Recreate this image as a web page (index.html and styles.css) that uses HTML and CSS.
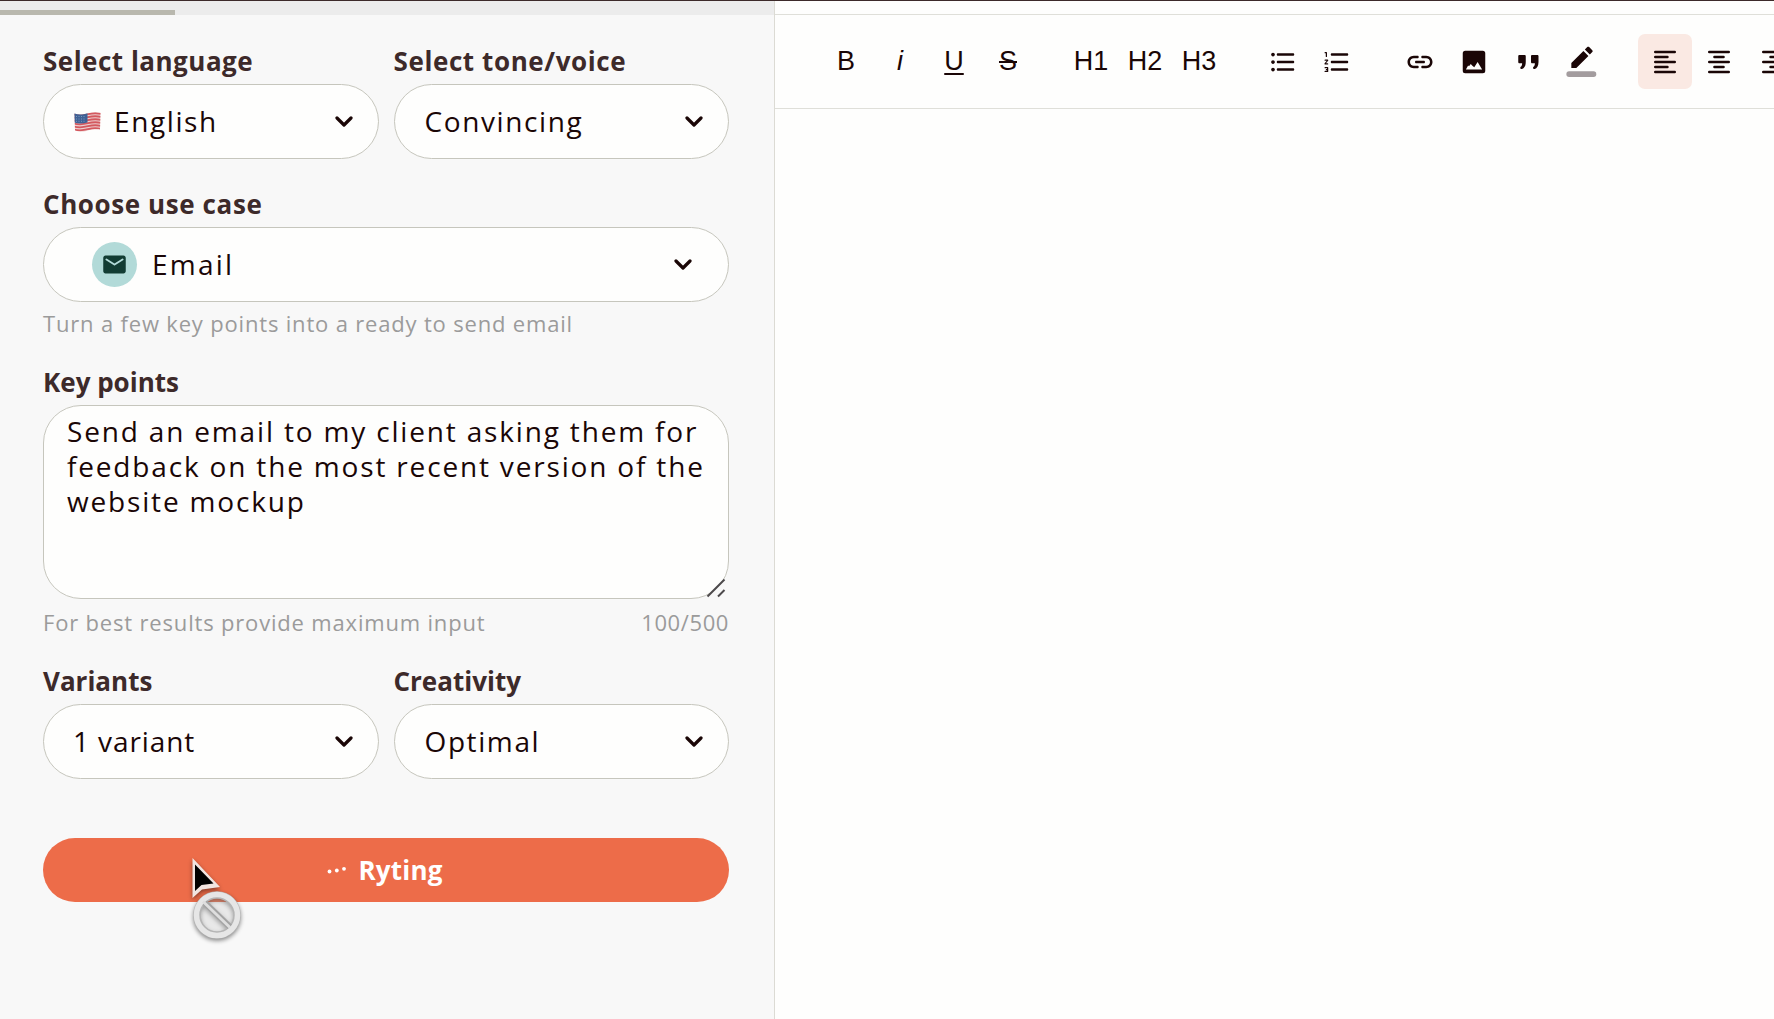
FILE: index.html
```html
<!DOCTYPE html>
<html lang="en">
<head>
  <meta charset="UTF-8" />
  <title>Editor</title>
  <link rel="stylesheet" href="styles.css">
</head>
<body>
  <svg class="defs">
    <symbol id="chevron" viewBox="0 0 18 12">
      <path d="M2 2l7 7 7-7" fill="none" stroke="#1a0606" stroke-width="3.2" stroke-linecap="round" stroke-linejoin="round" />
    </symbol>
  </svg>

  <div class="app">
    <aside class="panel">
      <div class="panel-top">
        <div class="progress"></div>
      </div>

      <form class="form">
        <div class="row">
          <div class="field">
            <label>Select language</label>
            <div class="select">
              <svg class="flag" viewBox="0 0 27 20">
                <clipPath id="wave"><path d="M0.5 1.5C5 3 9 2.500 14 1.200S23 0 26.500 0.800L26 17.500C22 17 18 17.500 13 18.700S5 20 1 18.500z" /></clipPath>
                <g clip-path="url(#wave)">
                  <rect width="27" height="20" fill="#ecd0d0" />
                  <path d="M0 2.500c5 1.500 9 1 14-.3s9-1.200 13-.4M0 5.500c5 1.500 9 1 14-.3s9-1.200 13-.4M0 8.500c5 1.500 9 1 14-.3s9-1.200 13-.4M0 11.500c5 1.500 9 1 14-.3s9-1.200 13-.4M0 14.500c5 1.500 9 1 14-.3s9-1.200 13-.4M0 17.500c5 1.500 9 1 14-.3s9-1.200 13-.4" fill="none" stroke="#d4595f" stroke-width="1.8" />
                  <path d="M0 0h13.500v10.500c-5 1.200-9 1.200-13.500 0z" fill="#3f6296" />
                  <path d="M2 4.500h10M2 7h10M2 9.300h10" stroke="#8ba4c6" stroke-width="0.8" stroke-dasharray="1 1.500" />
                </g>
              </svg>
              <span class="value">English</span>
              <svg class="chevron"><use href="#chevron" /></svg>
            </div>
          </div>
          <div class="field">
            <label class="wide">Select tone/voice</label>
            <div class="select">
              <span class="value">Convincing</span>
              <svg class="chevron"><use href="#chevron" /></svg>
            </div>
          </div>
        </div>

        <div class="field use-case">
          <label class="wide">Choose use case</label>
          <div class="select">
            <span class="badge">
              <svg viewBox="0 0 24 24"><path fill="#123c33" d="M20 4H4c-1.100 0-2 .9-2 2v12c0 1.100.9 2 2 2h16c1.100 0 2-.9 2-2V6c0-1.100-.9-2-2-2zm-.4 4.250l-7.070 4.420c-.32.2-.74.2-1.060 0L4.400 8.250a.85.85 0 1 1 .9-1.440L12 11l6.700-4.190a.85.85 0 1 1 .9 1.440z" /></svg>
            </span>
            <span class="value">Email</span>
            <svg class="chevron"><use href="#chevron" /></svg>
          </div>
          <div class="help">Turn a few key points into a ready to send email</div>
        </div>

        <div class="field key-points">
          <label class="tight">Key points</label>
          <div class="textarea-wrap">
            <textarea spellcheck="false">Send an email to my client asking them for feedback on the most recent version of the website mockup</textarea>
            <svg class="resizer" viewBox="0 0 20 20"><path d="M1.500 18.500l17-17M12 18.500l6.500-6.500" stroke="#4d4a4c" stroke-width="2" /></svg>
          </div>
          <div class="help">
            <span>For best results provide maximum input</span>
            <span class="count">100/500</span>
          </div>
        </div>

        <div class="row options">
          <div class="field">
            <label class="tight">Variants</label>
            <div class="select">
              <span class="value tight">1 variant</span>
              <svg class="chevron"><use href="#chevron" /></svg>
            </div>
          </div>
          <div class="field">
            <label class="tight">Creativity</label>
            <div class="select">
              <span class="value">Optimal</span>
              <svg class="chevron"><use href="#chevron" /></svg>
            </div>
          </div>
        </div>

        <button class="submit" type="button" disabled>
          <svg class="dots" viewBox="0 0 20 8">
            <circle cx="2.500" cy="5.500" r="1.900" /><circle cx="9.800" cy="4.500" r="1.900" /><circle cx="17" cy="2.800" r="1.900" />
          </svg>
          <span>Ryting</span>
        </button>
      </form>
    </aside>

    <main class="editor">
      <div class="editor-top"></div>
      <div class="toolbar">
        <div class="group">
          <button>B</button>
          <button class="italic">i</button>
          <button class="underline">U</button>
          <button class="strike">S</button>
        </div>
        <div class="group">
          <button>H1</button>
          <button>H2</button>
          <button>H3</button>
        </div>
        <div class="group icons">
          <button>
            <svg viewBox="0 0 24 24"><path d="M4 10.500c-.83 0-1.500.67-1.500 1.500s.67 1.500 1.500 1.500 1.500-.67 1.500-1.500-.67-1.500-1.500-1.500zm0-6c-.83 0-1.500.67-1.500 1.500S3.170 7.500 4 7.500 5.500 6.830 5.500 6 4.830 4.500 4 4.500zm0 12c-.83 0-1.500.68-1.500 1.500s.68 1.500 1.500 1.500 1.500-.68 1.500-1.500-.67-1.500-1.500-1.500zM8 19h12c.55 0 1-.45 1-1s-.45-1-1-1H8c-.55 0-1 .45-1 1s.45 1 1 1zm0-6h12c.55 0 1-.45 1-1s-.45-1-1-1H8c-.55 0-1 .45-1 1s.45 1 1 1zM7 6c0 .55.45 1 1 1h12c.55 0 1-.45 1-1s-.45-1-1-1H8c-.55 0-1 .45-1 1z" /></svg>
          </button>
          <button>
            <svg viewBox="0 0 24 24"><path d="M8 7h12c.55 0 1-.45 1-1s-.45-1-1-1H8c-.55 0-1 .45-1 1s.45 1 1 1zm12 10H8c-.55 0-1 .45-1 1s.45 1 1 1h12c.55 0 1-.45 1-1s-.45-1-1-1zm0-6H8c-.55 0-1 .45-1 1s.45 1 1 1h12c.55 0 1-.45 1-1s-.45-1-1-1zM4.500 16h-2c-.28 0-.5.220-.5.500s.22.500.5.500H4v.5h-.5c-.28 0-.5.220-.5.500s.22.500.5.500H4v.5H2.500c-.28 0-.5.220-.5.500s.22.500.5.500h2c.28 0 .5-.22.5-.5v-3c0-.28-.22-.5-.5-.5zm-2-11H3v2.500c0 .28.22.500.5.500s.5-.22.500-.5v-3c0-.28-.22-.5-.5-.5h-1c-.28 0-.5.220-.5.500s.22.500.5.500zm2 5h-2c-.28 0-.5.220-.5.500s.22.500.5.500h1.300l-1.680 1.960c-.08.09-.12.210-.12.320v.22c0 .28.22.500.5.500h2c.28 0 .5-.22.500-.5s-.22-.5-.5-.5H3.200l1.680-1.960c.08-.09.12-.21.12-.32v-.22c0-.28-.22-.5-.5-.5z" /></svg>
          </button>
        </div>
        <div class="group">
          <button>
            <svg viewBox="0 0 24 24"><path d="M17 7h-3c-.55 0-1 .45-1 1s.45 1 1 1h3c1.650 0 3 1.350 3 3s-1.350 3-3 3h-3c-.55 0-1 .45-1 1s.45 1 1 1h3c2.760 0 5-2.240 5-5s-2.240-5-5-5zm-9 5c0 .55.45 1 1 1h6c.55 0 1-.45 1-1s-.45-1-1-1H9c-.55 0-1 .45-1 1zm2 3H7c-1.650 0-3-1.350-3-3s1.350-3 3-3h3c.55 0 1-.45 1-1s-.45-1-1-1H7c-2.760 0-5 2.240-5 5s2.240 5 5 5h3c.55 0 1-.45 1-1s-.45-1-1-1z" /></svg>
          </button>
          <button>
            <svg viewBox="0 0 24 24"><path fill-rule="evenodd" d="M5 3h14a2 2 0 0 1 2 2v14a2 2 0 0 1-2 2H5a2 2 0 0 1-2-2V5a2 2 0 0 1 2-2zM5.500 18h13l-3.600-6-2.700 4.200-1.500-1.200-1.300-1.500-1.400 1.800-.7-.6z" /></svg>
          </button>
          <button>
            <svg viewBox="0 0 24 24"><path d="M3 6h4c.6 0 1 .4 1 1v4.500c0 3.200-1.300 5.200-3 5.700-.8.200-1.300-.1-1.300-.8v-.8c1.100-.5 1.400-1.800 1.400-3.100H3c-.6 0-1-.4-1-1V7c0-.6.400-1 1-1z" transform="translate(2.200 .4)" /><path d="M3 6h4c.6 0 1 .4 1 1v4.500c0 3.200-1.300 5.200-3 5.700-.8.200-1.300-.1-1.300-.8v-.8c1.100-.5 1.400-1.800 1.400-3.100H3c-.6 0-1-.4-1-1V7c0-.6.400-1 1-1z" transform="translate(12.400 .4)" /></svg>
          </button>
          <button>
            <svg class="marker" viewBox="0 0 24 24"><path d="M13.060 5.190l3.750 3.750L7.750 18H4v-3.750l9.060-9.060zm4.820 2.680l-3.750-3.750 1.830-1.830c.39-.39 1.020-.39 1.410 0l2.340 2.340c.39.39.39 1.020 0 1.410l-1.830 1.830z" /><rect x="0.300" y="20.500" width="22.400" height="4.200" rx="2" fill="#a39c9e" /></svg>
          </button>
        </div>
        <div class="group">
          <button class="active">
            <svg class="align" viewBox="0 0 24 26"><path d="M2.200 3h19.600M2.200 8h12.300M2.200 13h19.600M2.200 18h12.300M2.200 23h19.600" /></svg>
          </button>
          <button>
            <svg class="align" viewBox="0 0 24 26"><path d="M2.200 3h19.600M7.400 8h9.200M2.200 13h19.600M7.400 18h9.200M2.200 23h19.600" /></svg>
          </button>
          <button>
            <svg class="align" viewBox="0 0 24 26"><path d="M2.200 3h19.600M9.500 8h12.300M2.200 13h19.600M9.500 18h12.300M2.200 23h19.600" /></svg>
          </button>
        </div>
      </div>
    </main>
  </div>

  <svg class="cursor" viewBox="0 0 56 86">
    <circle cx="26" cy="58" r="20" fill="#fff" fill-opacity="0.2" />
    <circle cx="26" cy="58" r="20" fill="none" stroke="#b5b5b5" stroke-width="7.600" />
    <path d="M12 44l28 27" stroke="#a3a3a3" stroke-width="6" />
    <circle cx="26" cy="58" r="20.500" fill="none" stroke="#e6e6e6" stroke-width="5.500" />
    <path d="M12 44.500l27 26" stroke="#dedede" stroke-width="3" />
    <path d="M1.500 1v40l9.500-8.500 18-2.500z" fill="#f1e4e0" />
    <path d="M4 7.500v26.500l6.500-6 12-1.500z" fill="#000" />
  </svg>
</body>
</html>
```
FILE: styles.css
```css
* {
  box-sizing: border-box;
}
body {
  margin: 0;
  height: 1019px;
  overflow: hidden;
  font-family: "Open Sans", sans-serif;
  color: #1a0606;
  background: #fefefd;
}
.defs {
  display: none;
}
.app {
  display: flex;
  height: 1019px;
  border-top: 1px solid #3d2a2a;
}
.panel {
  width: 775px;
  background: #f8f8f8;
  border-right: 1px solid #dcdbd4;
}
.panel-top {
  display: flex;
  align-items: flex-end;
  height: 14px;
  background: #ececec;
}
.progress {
  width: 175px;
  height: 5px;
  background: #b9b8ae;
}
.form {
  display: flex;
  flex-direction: column;
  width: 729px;
  padding: 28px 0 0 43px;
}
.row {
  display: grid;
  grid-template-columns: 1fr 1fr;
  gap: 15px;
}
label {
  display: block;
  margin-bottom: 5px;
  font-size: 26px;
  font-weight: 700;
  line-height: 36px;
  letter-spacing: 0.5px;
  color: #3d2a2a;
}
label.wide {
  letter-spacing: 0.6px;
}
label.tight {
  letter-spacing: 0;
}
.select {
  display: flex;
  align-items: center;
  height: 75px;
  padding: 0 25px 0 30px;
  background: #fefefd;
  border: 1px solid #c6c6bd;
  border-radius: 38px;
}
.value {
  flex: 1;
  padding-bottom: 2px;
  font-size: 28px;
  line-height: 36px;
  letter-spacing: 1.6px;
}
.value.tight {
  margin-left: -1px;
  letter-spacing: 0.9px;
}
.chevron {
  width: 18px;
  height: 12px;
}
.flag {
  width: 27px;
  height: 20px;
  margin-right: 13px;
}
.use-case {
  margin-top: 27px;
}
.use-case .select {
  padding: 0 36px 0 48px;
}
.use-case .value {
  letter-spacing: 2.2px;
}
.badge {
  display: flex;
  align-items: center;
  justify-content: center;
  width: 45px;
  height: 45px;
  margin-right: 15px;
  background: #b2dad8;
  border-radius: 50%;
}
.badge svg {
  width: 27px;
  height: 27px;
}
.help {
  display: flex;
  justify-content: space-between;
  margin-top: 5px;
  font-size: 22px;
  line-height: 32px;
  letter-spacing: 0.82px;
  color: #9b9b9b;
}
.key-points {
  margin-top: 25px;
}
.textarea-wrap {
  position: relative;
  height: 194px;
}
textarea {
  display: block;
  width: 100%;
  height: 194px;
  padding: 8px 12px 8px 23px;
  font: 28px/35px "Open Sans", sans-serif;
  letter-spacing: 1.83px;
  color: #1a0606;
  background: #fefefd;
  border: 1px solid #c6c6bd;
  border-radius: 38px;
  resize: none;
  overflow: hidden;
}
.resizer {
  position: absolute;
  right: 3px;
  bottom: 1px;
  width: 20px;
  height: 20px;
}
.key-points .help {
  margin-top: 7px;
}
.count {
  letter-spacing: 0.6px;
}
.options {
  margin-top: 25px;
}
.submit {
  display: flex;
  align-items: center;
  justify-content: center;
  gap: 11px;
  height: 64px;
  margin-top: 59px;
  padding: 0 2px 0 0;
  font: 700 26px/36px "Open Sans", sans-serif;
  letter-spacing: 0.2px;
  color: #fff;
  background: #ed6c49;
  border: 0;
  border-radius: 32px;
}
.dots {
  width: 20px;
  height: 8px;
  fill: #fff;
}
.editor {
  flex: 1;
  overflow: hidden;
}
.editor-top {
  height: 14px;
  border-bottom: 1px solid #dfdfd9;
}
.toolbar {
  display: flex;
  gap: 29px;
  width: 1100px;
  height: 94px;
  padding: 19px 0 0 44px;
  border-bottom: 1px solid #dfdfd9;
}
.group {
  display: flex;
}
.group.icons {
  margin-left: 1px;
}
.toolbar button {
  display: flex;
  align-items: center;
  justify-content: center;
  width: 54px;
  height: 55px;
  padding: 0;
  font: 27px "Liberation Sans", Arial, sans-serif;
  color: #1a0606;
  background: none;
  border: 0;
  border-radius: 7px;
}
.toolbar .active {
  background: #fae9e3;
}
.toolbar .italic {
  font-style: italic;
}
.toolbar .underline {
  text-decoration: underline;
  text-decoration-thickness: 2px;
  text-underline-offset: 3px;
}
.toolbar .strike {
  text-decoration: line-through;
  text-decoration-thickness: 2px;
}
.toolbar svg {
  width: 30px;
  height: 30px;
  fill: #1a0606;
}
.toolbar .marker {
  width: 32px;
  height: 32px;
  margin-bottom: 4px;
  overflow: visible;
}
.toolbar .align {
  width: 24px;
  height: 26px;
  fill: none;
  stroke: #1a0606;
  stroke-width: 2.4;
  stroke-linecap: round;
}
.cursor {
  position: absolute;
  left: 191px;
  top: 857px;
  width: 56px;
  height: 86px;
  filter: drop-shadow(0 2px 2px rgba(0, 0, 0, 0.45));
}
```
